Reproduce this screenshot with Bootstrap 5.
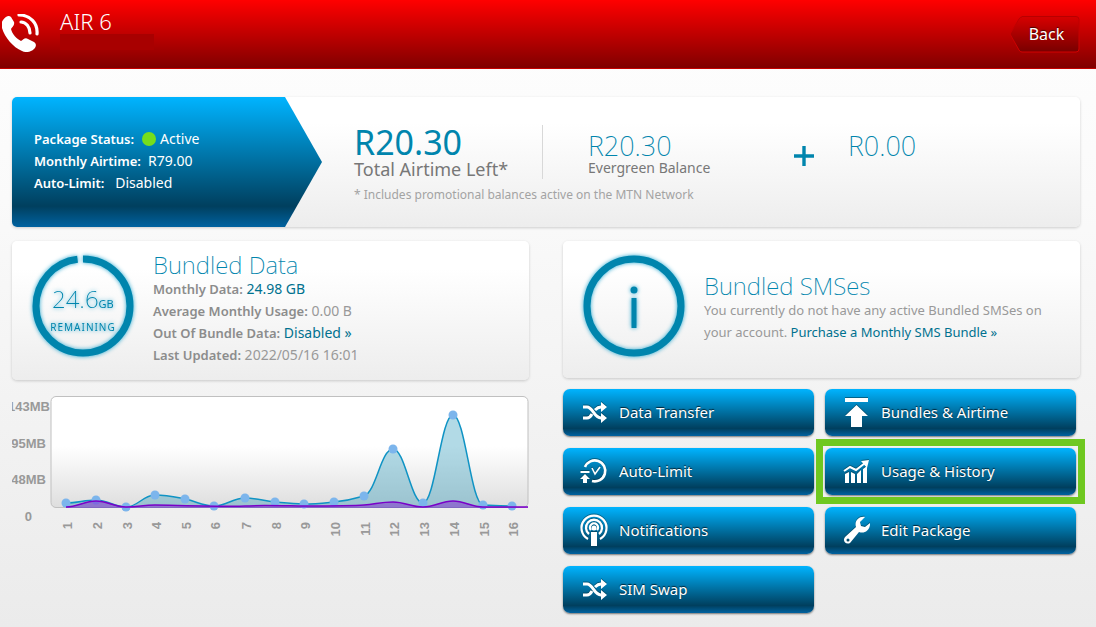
<!DOCTYPE html>
<html lang="en">
<head>
<meta charset="utf-8">
<meta name="viewport" content="width=device-width, initial-scale=1">
<title>AIR 6</title>
<link href="https://cdn.jsdelivr.net/npm/bootstrap@5.3.0/dist/css/bootstrap.min.css" rel="stylesheet">
<style>
  :root { --brand: #0085ad; --deep: #00718f; --blue: linear-gradient(#00b4ff 0%, #003f5e 84%, #0062a0 100%); }
  body { font: 14px/22px "Noto Sans", "Open Sans", sans-serif; color: #999; background: linear-gradient(#fefefe, #fafafa 200px, #ebebeb) no-repeat #ebebeb; min-height: 100vh; }
  a { color: var(--deep); text-decoration: none; }
  .topbar { height: 69px; background: linear-gradient(#f00, #800000); border-bottom: 1px solid #c40000; padding: 0 16px 0 2px; }
  .topbar h1 { font-size: 22px; line-height: 26px; font-weight: 300; color: #fff; }
  .phone { margin-top: 14px; }
  .masked { width: 94px; height: 16px; background: #a80000; }
  .back-btn { width: 71px; height: 38px; border: 0; background: none; color: #fff; font-size: 16px; padding: 0 0 3px 4px; text-shadow: 0 -1px 1px #400; }
  .back-btn svg { inset: 0; z-index: -1; }
  main { padding: 28px 16px 12px 12px; }
  .panel { background: linear-gradient(#fff 20%, #ededed); border-radius: 5px; box-shadow: 0 1px 3px rgba(0,0,0,.18); }
  .status { width: 310px; padding: 0 22px 2px; background: var(--blue); color: #fff; clip-path: polygon(0 0, 273px 0, 100% 50%, 273px 100%, 0 100%); }
  .status strong { font-size: 13px; font-weight: 600; }
  .dot { width: 14px; height: 14px; background: #76dd1c; }
  .overview { height: 130px; }
  .amount { color: var(--brand); font-size: 34px; line-height: 34px; }
  .amount-sm { color: var(--brand); font-size: 27px; line-height: 26px; font-weight: 200; }
  .panel h2 { color: var(--brand); font-size: 24px; line-height: 26px; font-weight: 200; }
  .total-label { font-size: 18px; line-height: 20px; color: #777; }
  .ever-label { line-height: 18px; color: #777; }
  .note { font-size: 12px; line-height: 16px; color: #a3a3a3; }
  .left-total { width: 189px; border-right: 1px solid #d8d8d8; height: 54px; }
  .evergreen { width: 251px; padding-left: 45px; }
  .plus { margin-top: 21px; }
  .facts strong { font-size: 13px; font-weight: 600; color: #8c8c8c; }
  .sms-text { font-size: 13px; }
  .data-panel { height: 139px; padding: 11px 17px; gap: 16px; }
  .sms-panel { height: 137px; padding: 0 17px; gap: 16px; }
  .two-col { display: grid; grid-template-columns: 1fr 1fr; column-gap: 34px; margin-top: 14px; }
  .ring { width: 108px; height: 108px; filter: drop-shadow(0 0 2px #28a8d0); flex: none; }
  .actions { display: grid; grid-template-columns: 1fr 1fr; gap: 12px 11px; padding-right: 4px; margin-top: 11px; }
  .action { height: 47px; border: 0; border-radius: 7px; background: var(--blue); color: #fff; font-size: 15px; padding: 0 16px 1px; gap: 10px; box-shadow: 0 1px 2px rgba(0,0,0,.5); text-shadow: 0 -1px 1px #023; }
  .action svg { width: 30px; height: 34px; filter: drop-shadow(0 -1px 0 #0348); }
  .marked::after { content: ""; position: absolute; inset: -9px; border: 7px solid #6fc820; }
  .chart { display: block; width: 100%; margin-top: 10px; }
  .chart text { font: bold 13px "Liberation Sans", Arial, sans-serif; fill: #999; }
</style>
</head>
<body>
<svg class="d-none">
  <symbol id="swap" viewBox="0 0 30 34"><g fill="none" stroke="#fff" stroke-width="3"><path d="M4 12h4c6 0 7 11 14 11h2M4 23h4c2 0 4-2 5-4M16 15c2-2 3-3 6-3h2"/></g><path fill="#fff" d="M22 7l6 5-6 5zM22 18l6 5-6 5z"/></symbol>
</svg>
<header class="topbar d-flex justify-content-between">
  <div class="d-flex">
    <svg class="phone me-3" width="38" height="38" viewBox="0 0 38 38" aria-hidden="true"><path fill="#fff" d="M1 6C4 2 7 1 9 3l3 5c1 3-2 5-3 7 1 5 6 10 10 12 2-1 4-4 7-2l6 3c3 2 2 5 0 7-3 3-8 4-12 2C11 33 3 24 0 14c-1-3-1-5 1-8z"/><g fill="none" stroke="#fff" stroke-width="3.2" stroke-linecap="round"><path d="M19 8c5 0 9 5 9 11"/><path d="M17 1c11 0 19 8 18 19"/></g></svg>
    <div class="pt-2 ps-1"><h1 class="mb-0">AIR 6</h1><div class="masked"></div></div>
  </div>
  <button class="back-btn position-relative z-1 mt-3" type="button"><svg class="position-absolute" width="71" height="38" viewBox="0 0 71 38" aria-hidden="true"><defs><linearGradient id="bk" x2="0" y2="1"><stop stop-color="#d80000"/><stop offset="1" stop-color="#780000"/></linearGradient><linearGradient id="be" x2="0" y2="1"><stop stop-color="#b80000"/><stop offset="1" stop-color="#d40000"/></linearGradient></defs><path d="M13 .5H67a3 3 0 0 1 3 3V33a3 3 0 0 1-3 3H13q-2 0-3-2L1 18 10 3q1-2 3-2z" fill="url(#bk)" stroke="url(#be)"/></svg>Back</button>
</header>
<main>
  <section class="panel overview d-flex overflow-hidden">
    <div class="status d-flex flex-column justify-content-center">
      <div class="d-flex align-items-center"><strong>Package Status:</strong><span class="dot rounded-circle ms-2 me-1"></span>Active</div>
      <div><strong>Monthly Airtime:</strong>&nbsp; R79.00</div>
      <div><strong>Auto-Limit:</strong>&nbsp;&nbsp; Disabled</div>
    </div>
    <div class="ps-4 ms-2 pt-4">
      <div class="d-flex pt-1">
        <div class="left-total"><div class="amount">R20.30</div><div class="total-label">Total Airtime Left*</div></div>
        <div class="evergreen pt-2"><div class="amount-sm">R20.30</div><div class="ever-label text-nowrap">Evergreen Balance</div></div>
        <svg class="plus me-4" width="30" height="20" viewBox="0 -1 30 20" role="img" aria-label="plus"><path d="M0 9h20M10-1v20" stroke="#0085ad" stroke-width="3.4"/></svg>
        <div class="pt-2 amount-sm">R0.00</div>
      </div>
      <div class="note mt-2">* Includes promotional balances active on the MTN Network</div>
    </div>
  </section>
  <div class="two-col">
    <section>
      <div class="panel data-panel d-flex">
        <svg class="ring" viewBox="0 0 108 108" role="img" aria-label="24.6GB remaining"><circle cx="54" cy="54" r="47" fill="none" stroke="#0085ad" stroke-width="7" stroke-dasharray="289.3 6" transform="rotate(-90 54 54)"/><g fill="#0085ad"><text x="23" y="56" font-size="24" font-weight="200">24.6<tspan font-size="11" font-weight="400">GB</tspan></text><text x="54" y="79" font-size="10" text-anchor="middle" letter-spacing="1">REMAINING</text></g></svg>
        <div class="facts text-nowrap">
          <h2 class="mb-0">Bundled Data</h2>
          <div><strong>Monthly Data:</strong> <a href="#">24.98 GB</a></div>
          <div><strong>Average Monthly Usage:</strong> 0.00 B</div>
          <div><strong>Out Of Bundle Data:</strong> <a href="#">Disabled »</a></div>
          <div><strong>Last Updated:</strong> 2022/05/16 16:01</div>
        </div>
      </div>
      <svg class="chart" viewBox="12 390 517 160" role="img" aria-label="Daily data usage">
        <defs><linearGradient id="plot" x2="0" y2="1"><stop offset=".45" stop-color="#fff"/><stop offset="1" stop-color="#dedede"/></linearGradient></defs>
        <rect x="51" y="396.500" width="477" height="111" rx="5" fill="url(#plot)" stroke="#c0c0c0"/>
        <path id="total" fill="#0085ad" fill-opacity=".3" d=""/>
        <path id="line" fill="none" stroke="#0f93c4" stroke-width="1.5" d=""/>
        <g id="dots" fill="#7cb5ec"></g>
        <path d="M66 507C78 507 84 501 96 501S114 507 126 507 143 505 155 505 230 507 245 506 292 506 304 506 352 506 364 505 381 502 393 502 411 507 423 507 441 501 453 501 471 507 483 507H528V508H66z" fill="#7a00cc" fill-opacity=".4"/>
        <path d="M66 507C78 507 84 501 96 501S114 507 126 507 143 505 155 505 230 507 245 506 292 506 304 506 352 506 364 505 381 502 393 502 411 507 423 507 441 501 453 501 471 507 483 507H528" fill="none" stroke="#7a00c8" stroke-width="1.5"/>
        <g text-anchor="end"><text x="50" y="411">143MB</text><text x="46" y="448">95MB</text><text x="46" y="484">48MB</text><text x="32" y="521">0</text></g>
        <g id="days" text-anchor="end"></g>
      </svg>
    </section>
    <section>
      <div class="panel sms-panel d-flex align-items-center">
        <svg class="ring mb-2" viewBox="0 0 108 108" aria-hidden="true"><circle cx="54" cy="54" r="47" fill="none" stroke="#0085ad" stroke-width="7"/><circle cx="54" cy="38" r="3.5" fill="#0085ad"/><path d="M54 46v30" stroke="#0085ad" stroke-width="5"/></svg>
        <div class="pb-1"><h2 class="mb-0">Bundled SMSes</h2><div class="sms-text">You currently do not have any active Bundled SMSes on your account. <a href="#">Purchase a Monthly SMS Bundle »</a></div></div>
      </div>
      <div class="actions">
        <button type="button" class="action d-flex align-items-center"><svg aria-hidden="true"><use href="#swap"/></svg>Data Transfer</button>
        <button type="button" class="action d-flex align-items-center"><svg viewBox="0 0 30 34" aria-hidden="true"><path fill="#fff" d="M4 3h23v4H4zM15.500 10 27 21h-6v11H10V21H4z"/></svg>Bundles &amp; Airtime</button>
        <button type="button" class="action d-flex align-items-center"><svg viewBox="0 0 30 34" aria-hidden="true"><g fill="none" stroke="#fff"><path stroke-width="2.600" d="M6 13a10.500 10.500 0 1 1 7 14"/><path stroke-width="2" d="M1.500 18h9"/><path stroke-width="1.600" d="M13 14l3 6 5-7"/></g><path fill="#fff" d="M6 20l5 5H8v4H4v-4H1z"/></svg>Auto-Limit</button>
        <button type="button" class="action marked position-relative d-flex align-items-center"><svg viewBox="0 0 30 34" aria-hidden="true"><path fill="#fff" d="M4 20l4-2v11H4zM10 18l4 2v9h-4zM16 20l4-4v13h-4zM22 15l4-3v17h-4zM20 7l8-1-2 8z"/><path fill="none" stroke="#fff" stroke-width="2" d="M3 17l6-4 6 3 9-7"/></svg>Usage &amp; History</button>
        <button type="button" class="action d-flex align-items-center"><svg viewBox="0 0 30 34" aria-hidden="true"><g fill="none" stroke="#fff" stroke-width="2.300"><path d="M9 26a12.500 12.500 0 1 1 12 0"/><path d="M10 21a8 8 0 1 1 10 0"/><path d="M12 17a4 4 0 1 1 6 0"/></g><circle cx="15" cy="15" r="2.500" fill="#fff"/><path fill="#fff" d="M12 19h6v14h-6z"/></svg>Notifications</button>
        <button type="button" class="action d-flex align-items-center"><svg viewBox="0 0 30 34" aria-hidden="true"><path fill="#fff" fill-rule="evenodd" d="M24 4c-6-1-11 4-9 10L4 24c-3 4 1 8 5 6l9-11c5 2 10-1 11-7v-2l-5 4-4-1-1-4zM7 25.500a1.500 1.500 0 1 1 0 3 1.500 1.500 0 0 1 0-3z"/></svg>Edit Package</button>
        <button type="button" class="action d-flex align-items-center"><svg aria-hidden="true"><use href="#swap"/></svg>SIM Swap</button>
      </div>
    </section>
  </div>
</main>
<script src="https://cdn.jsdelivr.net/npm/bootstrap@5.3.0/dist/js/bootstrap.bundle.min.js"></script>
<script>
  // Daily usage as [x, y] on the plot, joined by a smooth curve.
  const pts = [[66,503],[96,500],[126,507],[155,495],[185,499],[214,506],[245,498],[275,502],[304,504],[334,502],[364,496],[393,449],[423,503],[453,415],[483,505],[512,506]];
  // Tangent is flat at peaks and troughs, and follows the neighbours elsewhere.
  const slope = i => {
    if (!pts[i - 1] || !pts[i + 1]) return 0;
    const a = pts[i][1] - pts[i - 1][1], b = pts[i + 1][1] - pts[i][1];
    return a * b <= 0 ? 0 : Math.sign(a) * Math.min(Math.abs(a), Math.abs(b)) * 1.5 / 30;
  };
  let d = `M${pts[0]}`;
  for (let i = 1; i < pts.length; i++) {
    const [x0, y0] = pts[i - 1], [x1, y1] = pts[i];
    d += `C${x0 + 12} ${y0 + 12 * slope(i - 1)} ${x1 - 12} ${y1 - 12 * slope(i)} ${x1} ${y1}`;
  }
  document.getElementById('line').setAttribute('d', d);
  document.getElementById('total').setAttribute('d', d + 'V508H66z');
  document.getElementById('dots').innerHTML = pts.map(p => `<circle cx="${p[0]}" cy="${p[1]}" r="4.5"/>`).join('');
  document.getElementById('days').innerHTML = pts.map((p, i) => `<text transform="translate(${p[0] + 6} 522) rotate(-90)">${i + 1}</text>`).join('');
</script>
</body>
</html>
